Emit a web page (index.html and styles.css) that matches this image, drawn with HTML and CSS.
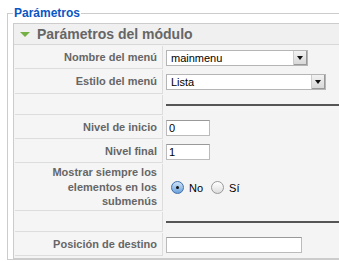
FILE: index.html
```html
<!DOCTYPE html>
<html lang="es">

<head>
    <meta charset="UTF-8">
    <meta name="viewport" content="width=device-width, initial-scale=1.0">
    <title>Parámetros del módulo</title>
    <link rel="stylesheet" href="styles.css">
</head>

<body>
    <fieldset class="params">
        <legend>Parámetros</legend>
        <div class="panel">
            <h3 class="panel-title"><span class="toggle"></span>Parámetros del módulo</h3>
            <table class="paramlist">
                <tr class="row">
                    <td class="key">Nombre del menú</td>
                    <td class="value">
                        <div class="select select-short"><span class="select-text">mainmenu</span><span class="select-btn"></span></div>
                    </td>
                </tr>
                <tr class="row row-wide">
                    <td class="key">Estilo del menú</td>
                    <td class="value">
                        <div class="select select-long"><span class="select-text">Lista</span><span class="select-btn"></span></div>
                    </td>
                </tr>
                <tr class="row row-spacer">
                    <td class="key"></td>
                    <td class="value"><hr class="sep"></td>
                </tr>
                <tr class="row">
                    <td class="key">Nivel de inicio</td>
                    <td class="value"><input class="text small" type="text" value="0"></td>
                </tr>
                <tr class="row">
                    <td class="key">Nivel final</td>
                    <td class="value"><input class="text small" type="text" value="1"></td>
                </tr>
                <tr class="row row-tall">
                    <td class="key">Mostrar siempre los elementos en los submenús</td>
                    <td class="value">
                        <div class="radios">
                            <label class="radio"><span class="dot checked"></span>No</label>
                            <label class="radio"><span class="dot"></span>Sí</label>
                        </div>
                    </td>
                </tr>
                <tr class="row row-spacer">
                    <td class="key"></td>
                    <td class="value"><hr class="sep"></td>
                </tr>
                <tr class="row">
                    <td class="key">Posición de destino</td>
                    <td class="value"><input class="text wide" type="text" value=""></td>
                </tr>
            </table>
        </div>
    </fieldset>
</body>

</html>
```

FILE: styles.css
```css
body {
    margin: 0;
    padding: 6px 0 0 7px;
    font-family: "Liberation Sans", Arial, sans-serif;
    background: #fff;
    overflow: hidden;
}

.params {
    width: 380px;
    margin: 0;
    padding: 2px 0 0 5px;
    border: 1px solid #ccc;
}

.params legend {
    padding: 0 1px;
    color: #0b55c4;
    font-size: 12px;
    font-weight: bold;
    line-height: 15px;
}

.panel {
    border: 1px solid #ccc;
    background: #f4f4f4;
}

.panel-title {
    display: flex;
    align-items: center;
    height: 20px;
    margin: 0;
    padding-left: 6px;
    background: #f0f0f0;
    border-bottom: 1px solid #d8d8d8;
    color: #666;
    font-size: 14px;
}

.toggle {
    width: 0;
    height: 0;
    margin-right: 7px;
    border-left: 5px solid transparent;
    border-right: 5px solid transparent;
    border-top: 5px solid #74b043;
}

.paramlist {
    width: 100%;
    padding-bottom: 1px;
    border-collapse: separate;
    border-spacing: 1px;
}

.paramlist td {
    padding: 0;
    vertical-align: middle;
}

.paramlist .key {
    width: 142px;
    height: 22px;
    padding-right: 5px;
    text-align: right;
    font-size: 11px;
    font-weight: bold;
    line-height: 14.5px;
    color: #666;
    background: #f5f5f5;
    border-right: 1px solid #ddd;
    border-bottom: 1px solid #ddd;
}

.paramlist .value {
    padding-left: 2px;
    font-size: 11px;
    line-height: 14px;
}

.row-wide .key {
    height: 23px;
}

.row-spacer .key {
    height: 19px;
}

.row-tall .key {
    height: 46px;
}

.select {
    display: flex;
    align-items: center;
    height: 14px;
    border: 1px solid #b5b5b5;
    background: #fff;
}

.select-short {
    width: 140px;
}

.select-long {
    width: 158px;
}

.select-text {
    flex: 1;
    padding-left: 4px;
    color: #000;
}

.select-btn {
    position: relative;
    width: 13px;
    height: 14px;
    background: linear-gradient(#f2f2f2, #d6d6d6);
    border-left: 1px solid #ccc;
    box-shadow: inset -1px -1px 0 #999;
}

.select-btn::after {
    content: "";
    position: absolute;
    left: 3px;
    top: 5px;
    border-left: 3px solid transparent;
    border-right: 3px solid transparent;
    border-top: 4px solid #111;
}

.sep {
    margin: 0;
    border: 0;
    border-top: 2px solid #555;
}

.text {
    display: block;
    box-sizing: border-box;
    height: 16px;
    margin: 0;
    padding: 0 2px;
    border: 1px solid #bbb;
    border-top-color: #999;
    font-family: "Liberation Sans", Arial, sans-serif;
    font-size: 11px;
    color: #000;
    background: #fff;
}

.small {
    width: 44px;
}

.wide {
    width: 136px;
}

.radios {
    display: flex;
    align-items: center;
    gap: 8px;
    padding-left: 5px;
}

.radio {
    display: flex;
    align-items: center;
    gap: 5px;
}

.dot {
    position: relative;
    width: 11px;
    height: 11px;
    border: 1px solid #999;
    border-radius: 50%;
    background: linear-gradient(#fff, #ddd);
}

.dot.checked {
    border-color: #3f6ea8;
    background: linear-gradient(#cfe3f7, #6ba2dc);
}

.dot.checked::after {
    content: "";
    position: absolute;
    left: 4px;
    top: 4px;
    width: 3px;
    height: 3px;
    border-radius: 50%;
    background: #111;
}
```
